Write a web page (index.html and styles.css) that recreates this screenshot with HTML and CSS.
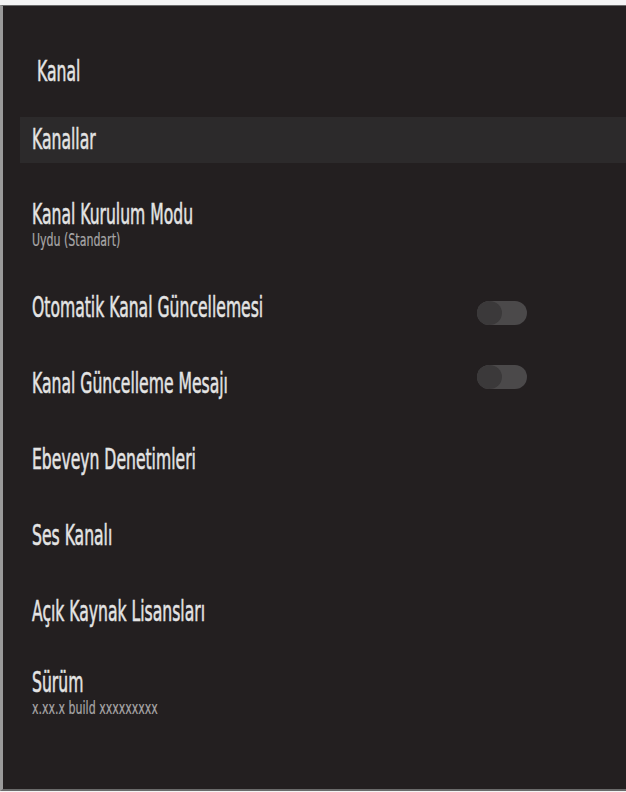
FILE: index.html
```html
<!DOCTYPE html>
<html lang="tr">
<head>
  <meta charset="UTF-8" />
  <title>Kanal</title>
  <link rel="stylesheet" href="styles.css">
</head>
<body>
  <div class="screen">
    <div class="header"><span class="title">Kanal</span></div>

    <ul class="menu">
      <li class="item focused"><span class="title">Kanallar</span></li>
      <li class="item two-line">
        <span class="title">Kanal Kurulum Modu</span>
        <span class="sub">Uydu (Standart)</span>
      </li>
      <li class="item">
        <span class="title">Otomatik Kanal Güncellemesi</span>
        <span class="switch low"></span>
      </li>
      <li class="item">
        <span class="title">Kanal Güncelleme Mesajı</span>
        <span class="switch high"></span>
      </li>
      <li class="item"><span class="title">Ebeveyn Denetimleri</span></li>
      <li class="item"><span class="title">Ses Kanalı</span></li>
      <li class="item"><span class="title">Açık Kaynak Lisansları</span></li>
      <li class="item two-line last">
        <span class="title">Sürüm</span>
        <span class="sub">x.xx.x build xxxxxxxxx</span>
      </li>
    </ul>
  </div>
</body>
</html>
```

FILE: styles.css
```css
* {
  margin: 0;
  padding: 0;
  box-sizing: border-box;
}
body {
  background: #f4f4f4;
  font-family: "DejaVu Sans Condensed", "Liberation Sans Narrow", Roboto, sans-serif;
  padding-top: 5px;
}
.screen {
  height: 786px;
  background: #231f20;
  border-left: 3px solid #9a9a9a;
  border-top: 1px solid #6a6a6a;
  border-bottom: 2px solid #6a6a6a;
  color: #e4e4e4;
}
.header {
  height: 111px;
  padding: 51px 0 0 34px;
}
.header .title {
  display: block;
}
.menu {
  list-style: none;
  display: flex;
  flex-direction: column;
  gap: 30px;
  margin-left: 17px;
}
.item {
  position: relative;
  display: flex;
  flex-direction: column;
  justify-content: center;
  min-height: 46px;
  padding-left: 12px;
}
.item.two-line {
  min-height: 62px;
}
.item.last {
  margin-top: -4px;
}
.focused {
  background: #2c2a2b;
}
.title {
  font-size: 28px;
  line-height: 30px;
  -webkit-text-stroke: 0.5px currentColor;
  transform: scaleX(0.62);
  transform-origin: left center;
  white-space: nowrap;
}
.sub {
  font-size: 18px;
  line-height: 19px;
  color: #a9a7a8;
  -webkit-text-stroke: 0.2px currentColor;
  transform: scaleX(0.68);
  transform-origin: left center;
  white-space: nowrap;
}
.switch {
  position: absolute;
  left: 457px;
  top: 11px;
  width: 50px;
  height: 24px;
  border-radius: 12px;
  background: #4b494a;
}
.switch.low {
  top: 16px;
}
.switch.high {
  top: 4px;
}
.switch::before {
  content: "";
  position: absolute;
  left: 0;
  top: 0;
  width: 25px;
  height: 24px;
  border-radius: 50%;
  background: #3b393a;
}
```
